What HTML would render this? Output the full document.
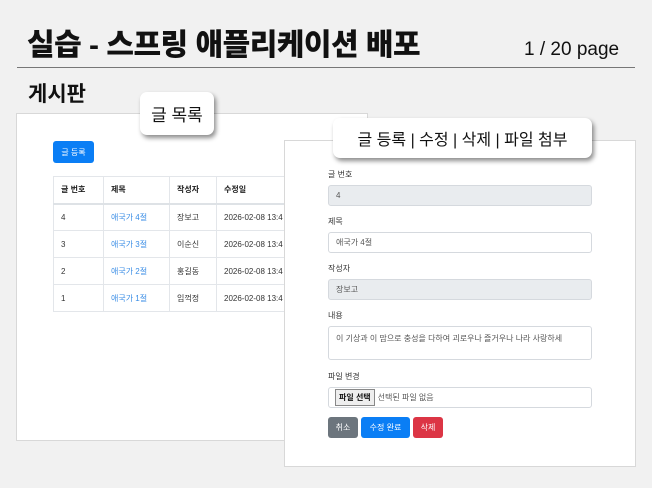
<!DOCTYPE html>
<html><head><meta charset="utf-8"><style>
*{margin:0;padding:0;box-sizing:border-box}
body{width:652px;height:488px;background:#f1f1f1;position:relative;overflow:hidden;font-family:"Liberation Sans","Noto Sans CJK KR",sans-serif;color:#222}
.abs{position:absolute}
.title{left:27px;top:20px;font-size:30px;font-weight:900;letter-spacing:-0.5px;color:#111}
.page{left:524px;top:39px;font-size:19px;color:#111}
.line{left:17px;top:67px;width:618px;height:1px;background:#777}
.sub{left:28px;top:78px;font-size:21px;font-weight:bold;color:#111}
.panel{background:#fff;border:1px solid #d8d8d8}
.bubble{background:#fff;border-radius:7px;box-shadow:2px 3px 5px rgba(0,0,0,.45);font-size:17px;color:#111;display:flex;align-items:center;justify-content:center}
.btn{color:#fff;font-size:8px;display:flex;align-items:center;justify-content:center;border-radius:3px}
table{border-collapse:collapse;font-size:8px}
td,th{border:1px solid #e3e6ea;height:27px;padding-left:7px;text-align:left;white-space:nowrap;color:#333}
th{font-weight:bold;border-bottom:2px solid #dee2e6;color:#222}
a{color:#3b8ee6;text-decoration:none}
.lbl{left:328px;font-size:8px;color:#333}
.inp{left:328px;width:264px;height:21px;border:1px solid #d5d9de;border-radius:3px;font-size:8px;color:#555;padding-left:7px;display:flex;align-items:center;background:#fff}
.ro{background:#e9ecef}
</style></head><body>
<div class="abs title">실습 - 스프링 애플리케이션 배포</div>
<div class="abs page">1 / 20 page</div>
<div class="abs line"></div>
<div class="abs sub">게시판</div>
<div class="abs panel" style="left:16px;top:113px;width:352px;height:328px;overflow:hidden">
 <div class="abs btn" style="left:36px;top:27px;width:41px;height:22px;background:#0a7ef5">글 등록</div>
 <table class="abs" style="left:36px;top:62px">
 <tr><th style="width:50px">글 번호</th><th style="width:66px">제목</th><th style="width:47px">작성자</th><th style="width:90px">수정일</th></tr>
 <tr><td>4</td><td><a>애국가 4절</a></td><td>장보고</td><td>2026-02-08 13:4</td></tr>
 <tr><td>3</td><td><a>애국가 3절</a></td><td>이순신</td><td>2026-02-08 13:4</td></tr>
 <tr><td>2</td><td><a>애국가 2절</a></td><td>홍길동</td><td>2026-02-08 13:4</td></tr>
 <tr><td>1</td><td><a>애국가 1절</a></td><td>임꺽정</td><td>2026-02-08 13:4</td></tr>
 </table>
</div>
<div class="abs bubble" style="left:140px;top:92px;width:74px;height:43px">글 목록</div>
<div class="abs panel" style="left:284px;top:140px;width:352px;height:327px"></div>
<div class="abs bubble" style="left:333px;top:118px;width:259px;height:40px;font-size:16px">글 등록 | 수정 | 삭제 | 파일 첨부</div>
<div class="abs lbl" style="top:169px">글 번호</div>
<div class="abs inp ro" style="top:185px">4</div>
<div class="abs lbl" style="top:216px">제목</div>
<div class="abs inp" style="top:232px">애국가 4절</div>
<div class="abs lbl" style="top:263px">작성자</div>
<div class="abs inp ro" style="top:279px">장보고</div>
<div class="abs lbl" style="top:310px">내용</div>
<div class="abs inp" style="top:326px;height:34px;align-items:flex-start;padding-top:6px">이 기상과 이 맘으로 충성을 다하여 괴로우나 즐거우나 나라 사랑하세</div>
<div class="abs lbl" style="top:371px">파일 변경</div>
<div class="abs inp" style="top:387px;padding-left:6px"><span style="border:1px solid #888;background:#eee;color:#111;padding:2px 3px;margin-right:3px;font-weight:bold">파일 선택</span>선택된 파일 없음</div>
<div class="abs btn" style="left:328px;top:417px;width:30px;height:21px;background:#6c757d">취소</div>
<div class="abs btn" style="left:361px;top:417px;width:49px;height:21px;background:#0a7ef5">수정 완료</div>
<div class="abs btn" style="left:413px;top:417px;width:30px;height:21px;background:#dc3545">삭제</div>
</body></html>
